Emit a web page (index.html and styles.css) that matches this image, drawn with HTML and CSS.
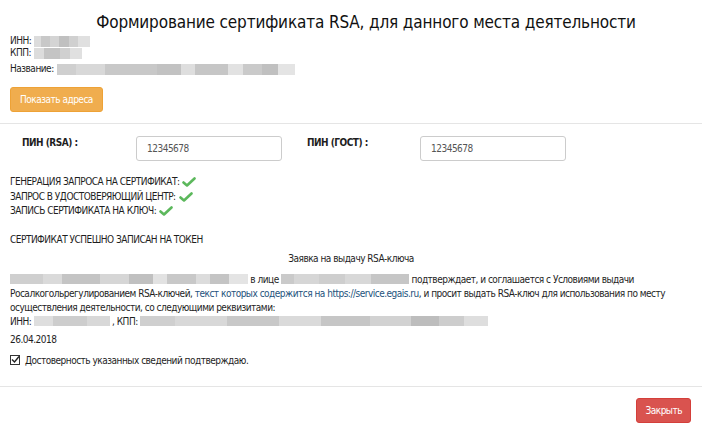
FILE: index.html
```html
<!DOCTYPE html>
<html lang="ru">
<head>
<meta charset="utf-8">
<link rel="stylesheet" href="styles.css">
</head>
<body>
<div class="modal">
  <div class="header">
    <h1 class="title">Формирование сертификата RSA, для данного места деятельности</h1>
    <div class="info">
      <div class="info-row">ИНН: <span class="blur b-inn"></span></div>
      <div class="info-row">КПП: <span class="blur b-kpp"></span></div>
      <div class="info-row">Название: <span class="blur b-name"></span></div>
    </div>
    <button class="btn btn-warning">Показать адреса</button>
  </div>
  <div class="body">
    <div class="pins">
      <div class="pin-label">ПИН (RSA) :</div>
      <div class="pin-input">12345678</div>
      <div class="pin-label pin-label2">ПИН (ГОСТ) :</div>
      <div class="pin-input">12345678</div>
    </div>
    <div class="steps">
      <div class="step">ГЕНЕРАЦИЯ ЗАПРОСА НА СЕРТИФИКАТ: <svg class="check" viewBox="0 0 14 12"><path d="M1.5 6.5 L5 9.5 L12.5 2.5" fill="none" stroke="#5cb85c" stroke-width="2.6" stroke-linecap="round" stroke-linejoin="round"/></svg></div>
      <div class="step">ЗАПРОС В УДОСТОВЕРЯЮЩИЙ ЦЕНТР: <svg class="check" viewBox="0 0 14 12"><path d="M1.5 6.5 L5 9.5 L12.5 2.5" fill="none" stroke="#5cb85c" stroke-width="2.6" stroke-linecap="round" stroke-linejoin="round"/></svg></div>
      <div class="step">ЗАПИСЬ СЕРТИФИКАТА НА КЛЮЧ: <svg class="check" viewBox="0 0 14 12"><path d="M1.5 6.5 L5 9.5 L12.5 2.5" fill="none" stroke="#5cb85c" stroke-width="2.6" stroke-linecap="round" stroke-linejoin="round"/></svg></div>
    </div>
    <div class="success">СЕРТИФИКАТ УСПЕШНО ЗАПИСАН НА ТОКЕН</div>
    <div class="claim-title">Заявка на выдачу RSA-ключа</div>
    <p class="claim"><span class="blur b-org"></span> в лице <span class="blur b-person"></span> подтверждает, и соглашается с Условиями выдачи<br>Росалкогольрегулированием RSA-ключей, <a class="link">текст которых содержится на https://service.egais.ru</a>, и просит выдать RSA-ключ для использования по месту<br>осуществления деятельности, со следующими реквизитами:<br>ИНН: <span class="blur b-inn2"></span> , КПП: <span class="blur b-kpp2"></span></p>
    <div class="date">26.04.2018</div>
    <label class="confirm"><span class="cb"><svg viewBox="0 0 11 11"><path d="M2 5.5 L4.5 8 L9 2.5" fill="none" stroke="#222" stroke-width="1.4"/></svg></span>Достоверность указанных сведений подтверждаю.</label>
  </div>
  <div class="footer">
    <button class="btn btn-danger">Закрыть</button>
  </div>
</div>
</body>
</html>
```
FILE: styles.css
```css
html, body {
  margin: 0;
  padding: 0;
  background: #fff;
}
body {
  font-family: "DejaVu Sans Condensed", "DejaVu Sans", sans-serif;
  font-size: 10px;
  letter-spacing: -0.5px;
  color: #1e1e1e;
}
.modal {
  width: 702px;
}
.header {
  padding: 11px 10px 11px 10px;
  border-bottom: 1px solid #e5e5e5;
}
.title {
  margin: 0 0 2px 0;
  font-size: 17px;
  letter-spacing: -0.15px;
  font-weight: normal;
  text-align: center;
  padding-left: 30px;
  line-height: 22px;
  color: #111;
}
.info-row {
  height: 12px;
  line-height: 12px;
  display: flex;
  align-items: center;
  gap: 3px;
}
.info-row:last-child {
  margin-top: 4px;
}
.blur {
  display: inline-block;
  height: 11px;
  vertical-align: middle;
  background: linear-gradient(90deg, #dcdcdc 0 12%, #c8c8c8 12% 28%, #d4d4d4 28% 45%, #c0c0c0 45% 62%, #d0d0d0 62% 78%, #e0e0e0 78% 100%);
}
.b-inn { width: 56px; }
.b-kpp { width: 48px; background: linear-gradient(90deg, #dcdcdc 0 20%, #c4c4c4 20% 55%, #d0d0d0 55% 75%, #e0e0e0 75% 100%); }
.b-name { width: 238px; background: linear-gradient(90deg, #cfcfcf 0 8%, #d8d8d8 8% 20%, #c8c8c8 20% 42%, #c2c2c2 42% 52%, #dedede 52% 58%, #c6c6c6 58% 72%, #e2e2e2 72% 78%, #cacaca 78% 86%, #c0c0c0 86% 93%, #e4e4e4 93% 100%); }
.b-org { width: 238px; background: linear-gradient(90deg, #cfcfcf 0 14%, #dadada 14% 22%, #c4c4c4 22% 38%, #d6d6d6 38% 50%, #c0c0c0 50% 60%, #e2e2e2 60% 66%, #c8c8c8 66% 78%, #dcdcdc 78% 84%, #c4c4c4 84% 92%, #e4e4e4 92% 100%); }
.b-person { width: 128px; background: linear-gradient(90deg, #cacaca 0 10%, #d6d6d6 10% 30%, #cecece 30% 50%, #d8d8d8 50% 70%, #c6c6c6 70% 100%); }
.b-inn2 { width: 76px; background: linear-gradient(90deg, #dedede 0 25%, #cdcdcd 25% 70%, #d8d8d8 70% 100%); }
.b-kpp2 { width: 348px; background: linear-gradient(90deg, #cfcfcf 0 10%, #d8d8d8 10% 25%, #c8c8c8 25% 40%, #dadada 40% 52%, #c6c6c6 52% 66%, #d2d2d2 66% 78%, #bdbdbd 78% 86%, #cdcdcd 86% 93%, #dedede 93% 100%); }
.btn {
  font-family: inherit;
  font-size: 10px;
  letter-spacing: -0.5px;
  color: #fff;
  border: 1px solid transparent;
  border-radius: 3px;
  height: 25px;
  padding: 0 9px;
  cursor: pointer;
}
.btn-warning {
  margin-top: 12px;
  background: #f0ad4e;
  border-color: #eea236;
}
.btn-danger {
  background: #d9534f;
  border-color: #d43f3a;
  padding: 0 8px;
}
.body {
  padding: 12px 10px 20px 10px;
  border-bottom: 1px solid #e5e5e5;
}
.pins {
  display: flex;
  align-items: flex-start;
}
.pin-label {
  font-weight: bold;
  padding-left: 12px;
  padding-top: 1px;
  box-sizing: border-box;
  width: 126px;
}
.pin-label2 {
  margin-left: 25px;
  padding-left: 0;
  width: 113px;
}
.pin-input {
  width: 146px;
  height: 25px;
  box-sizing: border-box;
  border: 1px solid #ccc;
  border-radius: 3px;
  padding: 0 10px;
  line-height: 23px;
  color: #555;
}
.steps {
  margin-top: 14px;
}
.step {
  line-height: 14.5px;
  display: flex;
  align-items: center;
  gap: 3px;
}
.check {
  width: 14px;
  height: 12px;
}
.success {
  margin-top: 15px;
}
.claim-title {
  text-align: center;
  margin-top: 8px;
}
.claim {
  margin: 9px 0 0 0;
  line-height: 14px;
}
.claim .blur {
  height: 10px;
  vertical-align: -1px;
}
.link {
  color: #23527c;
}
.date {
  margin-top: 5px;
}
.confirm {
  display: flex;
  align-items: center;
  gap: 5px;
  margin-top: 10px;
}
.cb {
  width: 10px;
  height: 10px;
  border: 1px solid #333;
  display: inline-block;
  box-sizing: border-box;
  position: relative;
}
.cb svg {
  position: absolute;
  left: -1px;
  top: -2px;
  width: 11px;
  height: 11px;
}
.footer {
  display: flex;
  justify-content: flex-end;
  padding: 11px 11px;
}
```
